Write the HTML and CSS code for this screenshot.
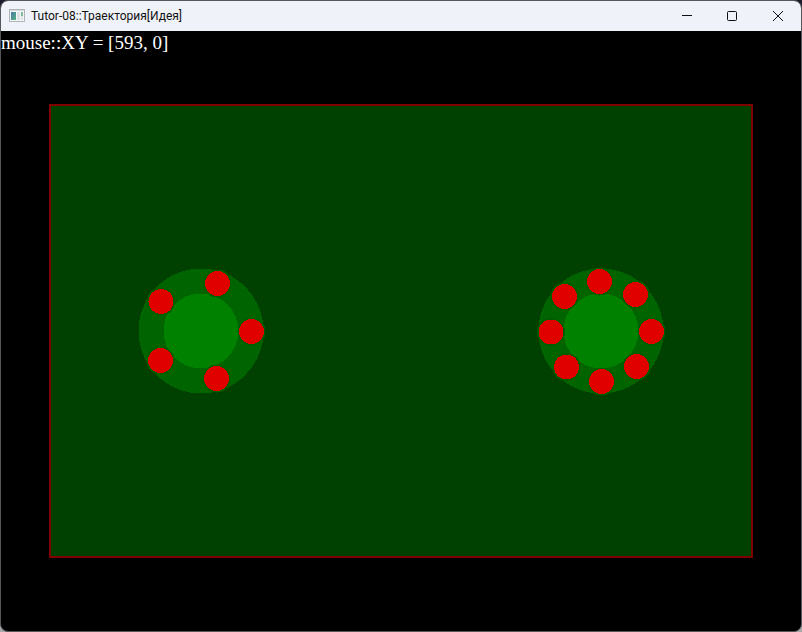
FILE: index.html
```html
<!DOCTYPE html>
<html lang="ru">
<head>
<meta charset="utf-8">
<title>Tutor-08::Траектория[Идея]</title>
<link rel="stylesheet" href="styles.css">
</head>
<body>
<main class="window">
  <header class="titlebar">
    <svg class="app-icon" viewBox="0 0 16 14" aria-hidden="true">
      <defs>
        <linearGradient id="pane" x1="0" y1="0" x2="1" y2="1">
          <stop offset="0" stop-color="#4679ad"/>
          <stop offset="1" stop-color="#58b27c"/>
        </linearGradient>
      </defs>
      <rect x=".5" y=".5" width="15" height="12" fill="#f4f6f7" stroke="#aeb4b8"/>
      <path d="M1 1.5h14" stroke="#d3d9dc"/>
      <rect x="2" y="3" width="5" height="8" fill="url(#pane)"/>
      <rect x="8" y="3" width="3" height="8" fill="#dde3e6"/>
      <rect x="12" y="3" width="2" height="4" fill="#7fb99a"/>
      <rect x="12" y="7" width="2" height="4" fill="#dce5e2"/>
    </svg>
    <h1 class="title">Tutor-08::Траектория[Идея]</h1>
    <div class="controls">
      <button class="control" type="button" aria-label="Свернуть"><svg viewBox="0 0 12 12"><path d="M2 5.5h10"/></svg></button>
      <button class="control" type="button" aria-label="Развернуть"><svg viewBox="0 0 12 12"><rect x="1.5" y="1.5" width="9" height="9" rx="1"/></svg></button>
      <button class="control" type="button" aria-label="Закрыть"><svg viewBox="0 0 12 12"><path d="M1 1l10 10M11 1L1 11"/></svg></button>
    </div>
  </header>
  <section class="scene">
    <svg class="field" viewBox="0 0 800 600" aria-hidden="true">
      <rect class="board" x="49" y="74" width="702" height="452"/>
      <circle class="ring" cx="200" cy="300" r="62.5"/>
      <circle class="core" cx="200" cy="300" r="37.5"/>
      <g class="ball">
        <circle cx="250.5" cy="300.5" r="12.5"/>
        <circle cx="216.5" cy="252.5" r="12.5"/>
        <circle cx="160" cy="270.5" r="12.5"/>
        <circle cx="159.5" cy="329.5" r="12.5"/>
        <circle cx="215.5" cy="347.5" r="12.5"/>
      </g>
      <circle class="ring" cx="600" cy="300" r="62.5"/>
      <circle class="core" cx="600" cy="300" r="37.5"/>
      <g class="ball">
        <circle cx="650.5" cy="300.5" r="12.5"/>
        <circle cx="634.5" cy="263.5" r="12.5"/>
        <circle cx="598.5" cy="250.5" r="12.5"/>
        <circle cx="563.5" cy="265.5" r="12.5"/>
        <circle cx="550" cy="301" r="12.5"/>
        <circle cx="565.5" cy="336" r="12.5"/>
        <circle cx="600.5" cy="350.5" r="12.5"/>
        <circle cx="635.5" cy="335.5" r="12.5"/>
      </g>
    </svg>
    <p class="readout">mouse::XY = [593, 0]</p>
  </section>
</main>
</body>
</html>
```
FILE: styles.css
```css
* { box-sizing: border-box; }

body {
  margin: 0;
  background: linear-gradient(#1c1b2c, #a8a8a8);
}

.window {
  display: flex;
  flex-direction: column;
  min-height: 100vh;
  border: 1px solid #55555c;
  border-radius: 8px;
  overflow: hidden;
  background: #000;
}

.titlebar {
  display: flex;
  align-items: center;
  height: 30px;
  padding-left: 8px;
  background: #f0f2f9;
  color: #111;
}

.app-icon {
  width: 16px;
  height: 14px;
}

.title {
  margin: 0 0 0 6px;
  font: 400 12px/16px "Segoe UI", Roboto, sans-serif;
  white-space: nowrap;
}

.controls {
  display: flex;
  margin-left: auto;
}

.control {
  display: grid;
  place-items: center;
  width: 46px;
  height: 30px;
  padding: 0;
  border: 0;
  background: none;
}

.control svg {
  width: 12px;
  height: 12px;
  fill: none;
  stroke: #111;
}

.scene {
  position: relative;
  flex: 1;
}

.field {
  display: block;
  width: 100%;
  shape-rendering: crispEdges;
}

.readout {
  position: absolute;
  top: 0;
  left: 0;
  margin: 0;
  color: #fff;
  font: 19px/24px Georgia, "Liberation Serif", serif;
  font-variant-numeric: oldstyle-nums;
}

.board {
  fill: #004000;
  stroke: #800000;
  stroke-width: 2;
}

.ring { fill: #006400; }

.core { fill: #008200; }

.ball {
  fill: #e00000;
  stroke: #005c00;
  stroke-width: 3;
  paint-order: stroke;
}
```
